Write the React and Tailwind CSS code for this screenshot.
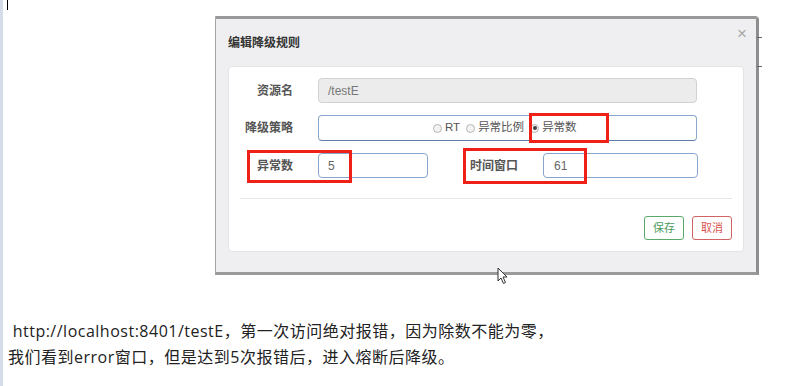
import React from 'react';

const Radio = ({ checked, label }) => (
    <label className="flex items-center gap-[3px] text-[11.5px] text-[#555]">
        <span className="w-[9px] h-[9px] rounded-full border border-[#b5b5b5] bg-[#f3f3f3] flex items-center justify-center">
            {checked && <span className="w-[4px] h-[4px] rounded-full bg-[#444]" />}
        </span>
        <span>{label}</span>
    </label>
);

const RedBox = ({ className }) => (
    <div className={`absolute border-[3px] border-[#ee2018] pointer-events-none ${className}`} />
);

const App = () => {
    return (
        <div className="relative w-[801px] h-[386px] overflow-hidden bg-white border-l-[3px] border-[#d5dce7] font-['Noto_Sans_CJK_SC',sans-serif]">
            {/* text cursor */}
            <div className="absolute left-[4px] top-0 w-px h-[10px] bg-black" />

            {/* small ticks right of the dialog */}
            <div className="absolute left-[754px] top-[37px] w-[5px] h-px bg-[#666]" />
            <div className="absolute left-[754px] top-[66px] w-[5px] h-px bg-[#666]" />

            {/* dialog */}
            <div className="ml-[212px] mt-[16px] w-[544px] h-[259px] bg-[#efeff2] border border-[#a3a3a3] border-t-[3px] border-t-[#999] border-r-[3px] border-r-[#8e8e8e] border-b-[3px] border-b-[#9a9a9a] rounded-tr-[4px] flex flex-col font-['Liberation_Sans','Noto_Sans_CJK_SC',sans-serif]">
                <div className="relative h-[47px] pl-[12px] flex items-center">
                    <span className="text-[12px] font-bold text-[#333] mt-[1px]">编辑降级规则</span>
                    <span className="absolute right-[9px] top-[6px] text-[17px] leading-none text-[#a8a8a8]">×</span>
                </div>
                <div className="mx-[12px] bg-white rounded-[4px] border border-[#e4e4e4] px-[11px] pt-[11px] pb-[11px] flex flex-col">
                    <div className="flex items-center h-[25px]">
                        <div className="w-[53px] text-right text-[12px] font-bold text-[#555]">资源名</div>
                        <div className="ml-[25px] w-[379px] h-[25px] rounded-[4px] border border-[#d2d2d2] bg-[#ececec] flex items-center px-[9px] text-[12px] text-[#777]">
                            /testE
                        </div>
                    </div>
                    <div className="flex items-center h-[26px] mt-[12px]">
                        <div className="w-[53px] text-right text-[12px] font-bold text-[#555]">降级策略</div>
                        <div className="ml-[25px] w-[379px] h-[26px] rounded-[4px] border border-[#8aa8cd] border-b-[#5e7ea6] flex items-center pl-[114px] gap-[6px]">
                            <Radio label="RT" />
                            <Radio label="异常比例" />
                            <Radio checked label="异常数" />
                        </div>
                    </div>
                    <div className="flex items-center h-[25px] mt-[12px]">
                        <div className="w-[53px] text-right text-[12px] font-bold text-[#555]">异常数</div>
                        <div className="ml-[25px] w-[110px] h-[25px] rounded-[4px] border border-[#86a6cd] flex items-center px-[9px] text-[12px] text-[#666]">
                            5
                        </div>
                        <div className="ml-[42px] w-[73px] text-[12px] font-bold text-[#555]">时间窗口</div>
                        <div className="w-[155px] h-[25px] rounded-[4px] border border-[#86a6cd] flex items-center px-[10px] text-[12px] text-[#666]">
                            61
                        </div>
                    </div>
                    <div className="mt-[20px] h-px bg-[#e6e6e6]" />
                    <div className="mt-[17px] flex justify-end gap-[8px]">
                        <button className="w-[40px] h-[24px] rounded-[3px] border border-[#5aa86a] text-[11px] text-[#4d9a5c] bg-white">
                            保存
                        </button>
                        <button className="w-[40px] h-[24px] rounded-[3px] border border-[#d06464] text-[11px] text-[#d9534f] bg-white">
                            取消
                        </button>
                    </div>
                </div>
            </div>

            {/* annotation boxes */}
            <RedBox className="left-[526px] top-[113px] w-[80px] h-[30px]" />
            <RedBox className="left-[244px] top-[150px] w-[105px] h-[33px]" />
            <RedBox className="left-[460px] top-[148px] w-[124px] h-[36px]" />

            {/* mouse pointer */}
            <svg className="absolute left-[494px] top-[267px]" width="12" height="18" viewBox="0 0 12 18">
                <path d="M1 1 L1 14 L4 11 L6.5 16.5 L8.5 15.5 L6 10 L10 10 Z" fill="#fff" stroke="#333" strokeWidth="1" strokeLinejoin="round" />
            </svg>

            <div className="mt-[43px] text-[16px] leading-[26px] tracking-[0.5px] text-[#222] font-['Open_Sans','Noto_Sans_CJK_SC',sans-serif]">
                <p className="pl-[5px]">&nbsp;http://localhost:8401/testE，第一次访问绝对报错，因为除数不能为零，</p>
                <p className="pl-[5px]">我们看到error窗口，但是达到5次报错后，进入熔断后降级。</p>
            </div>
        </div>
    );
};

export default App;
